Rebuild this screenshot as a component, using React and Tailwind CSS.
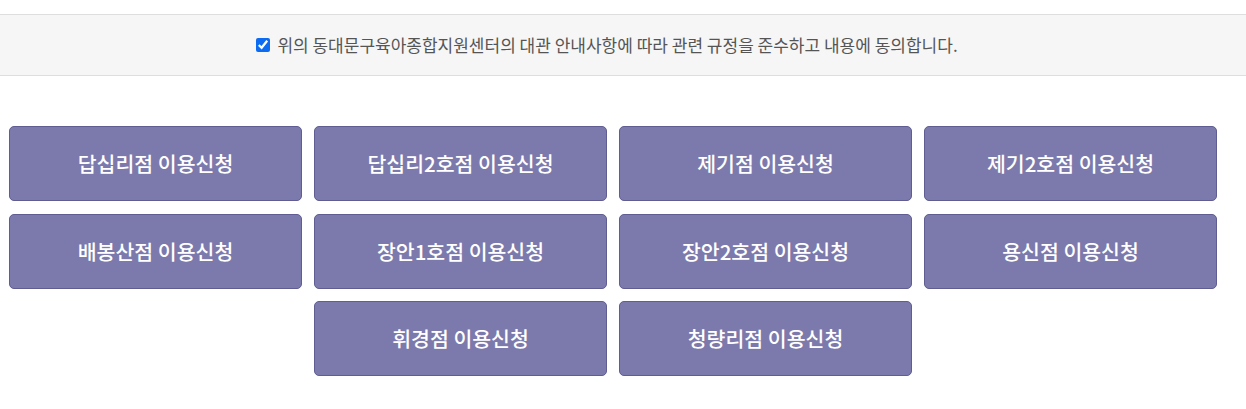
const branches = [
  '답십리점',
  '답십리2호점',
  '제기점',
  '제기2호점',
  '배봉산점',
  '장안1호점',
  '장안2호점',
  '용신점',
  '휘경점',
  '청량리점',
];

export default function App() {
  return (
    <div
      className="min-h-[409px] bg-white pt-[14px]"
      style={{ fontFamily: '"Noto Sans CJK KR", "Noto Sans", sans-serif' }}
    >
      <div className="flex h-[62px] items-center justify-center border-y border-[#dedede] bg-[#f6f6f6] pr-[32px]">
        <label className="flex items-center gap-[7px] text-[17px] text-[#555]">
          <input type="checkbox" defaultChecked className="h-[14px] w-[14px] accent-[#0b6cf2]" />
          위의 동대문구육아종합지원센터의 대관 안내사항에 따라 관련 규정을 준수하고 내용에 동의합니다.
        </label>
      </div>

      <div className="mt-[50px] flex w-[1217px] flex-wrap justify-center gap-x-[12px] gap-y-[12.5px] pl-[9px]">
        {branches.map((name) => (
          <button
            key={name}
            type="button"
            className="flex h-[75px] w-[293px] items-center justify-center rounded-[5px] border border-[#5f5d91] bg-[#7c7aac] text-[20.5px] font-medium text-white"
          >
            {name} 이용신청
          </button>
        ))}
      </div>
    </div>
  );
}
